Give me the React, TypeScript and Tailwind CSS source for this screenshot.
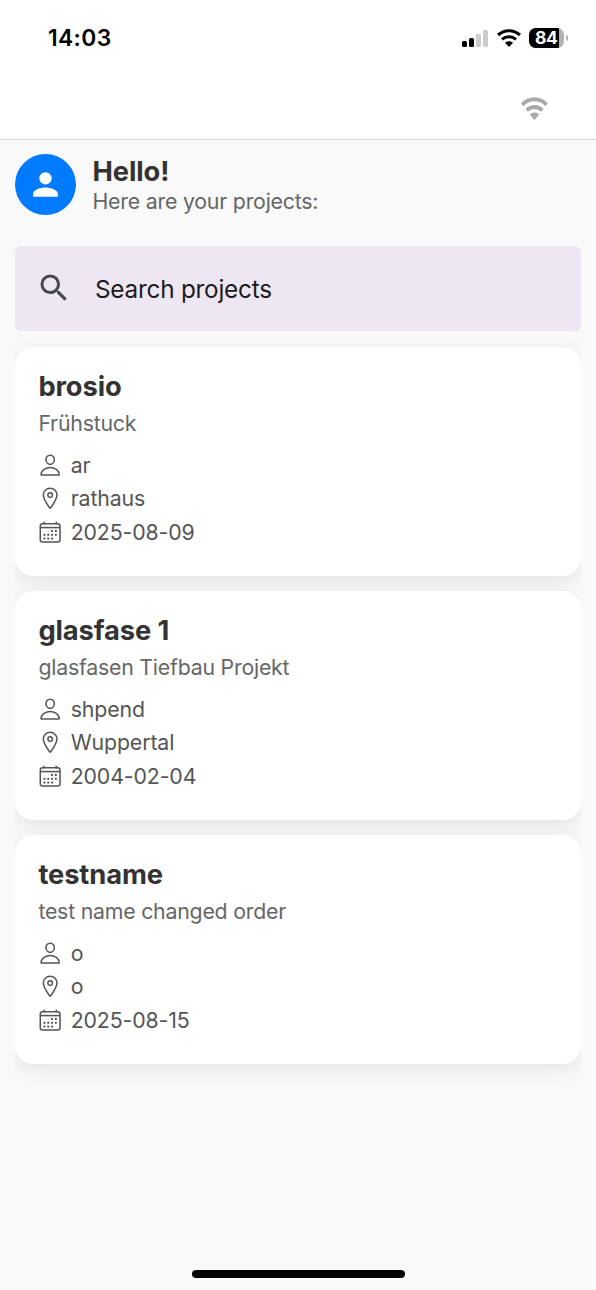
import {
  IoCalendarOutline,
  IoLocationOutline,
  IoPersonOutline,
} from 'react-icons/io5';
import { MdPerson, MdSearch } from 'react-icons/md';
import type { IconType } from 'react-icons';

type Project = {
  name: string;
  description: string;
  client: string;
  location: string;
  date: string;
};

const projects: Project[] = [
  { name: 'brosio', description: 'Frühstuck', client: 'ar', location: 'rathaus', date: '2025-08-09' },
  { name: 'glasfase 1', description: 'glasfasen Tiefbau Projekt', client: 'shpend', location: 'Wuppertal', date: '2004-02-04' },
  { name: 'testname', description: 'test name changed order', client: 'o', location: 'o', date: '2025-08-15' },
];

function WifiIcon({ className }: { className: string }) {
  return (
    <svg viewBox="0 0 24 18" preserveAspectRatio="none" className={className} fill="none" stroke="currentColor">
      <path d="M1.1 6C7.2.3 16.8.3 22.9 6" strokeWidth="3.2" />
      <path d="M5 10.4c3.9-3.5 10.1-3.5 14 0" strokeWidth="3.1" />
      <path d="M8 13.7c2.3-2 5.7-2 8 0l-3.5 3.9q-.5.5-1 0z" fill="currentColor" stroke="none" />
    </svg>
  );
}

function StatusBar() {
  return (
    <div className="flex h-[76px] items-center justify-between pl-12 pr-[28px]">
      <span className="mt-px text-[22.8px] font-semibold tracking-[0.4px] text-black">14:03</span>
      <div className="flex items-center">
        <div className="flex h-[17px] items-end gap-[2px]">
          <span className="h-[6px] w-[5px] rounded-[1.5px] bg-black" />
          <span className="h-[9px] w-[5px] rounded-[1.5px] bg-black" />
          <span className="h-[13px] w-[5px] rounded-[1.5px] bg-[#cccccc]" />
          <span className="h-[17px] w-[5px] rounded-[1.5px] bg-[#cccccc]" />
        </div>
        <WifiIcon className="ml-[9px] h-[18px] w-[24px] text-black" />
        <div className="ml-2 flex h-[20px] w-[35px] items-center overflow-hidden rounded-[6.5px] bg-[linear-gradient(to_right,#000_30px,#b3b3b3_30px)] pl-[6px]">
          <span className="text-[17.5px] font-bold leading-none tracking-[-0.3px] text-white">84</span>
        </div>
        <span className="ml-[2px] h-[6px] w-[2px] rounded-r-full bg-[#b3b3b3]" />
      </div>
    </div>
  );
}

function Detail({ icon: Icon, text }: { icon: IconType; text: string }) {
  return (
    <div className="flex h-[33.6px] items-center gap-[8px]">
      <Icon className="size-[24.3px] text-[#555555]" />
      <span className="text-[21.3px] leading-[26px] tracking-[-0.12px] text-[#555555]">{text}</span>
    </div>
  );
}

function ProjectCard({ project }: { project: Project }) {
  return (
    <div className="h-[228.7px] rounded-[18px] bg-white px-[23.2px] pt-[23px] shadow-[0_5px_18px_rgba(0,0,0,0.09)]">
      <h2 className="text-[27.3px] font-bold leading-[34px] tracking-[-0.1px] text-[#333333]">{project.name}</h2>
      <p className="mt-[6px] text-[21.3px] leading-[26px] tracking-[-0.22px] text-[#666666]">{project.description}</p>
      <div className="mt-[12px]">
        <Detail icon={IoPersonOutline} text={project.client} />
        <Detail icon={IoLocationOutline} text={project.location} />
        <Detail icon={IoCalendarOutline} text={project.date} />
      </div>
    </div>
  );
}

export default function App() {
  return (
    <div className="flex h-[1290px] w-[596px] flex-col overflow-hidden bg-[#f9f9f9] font-['Inter',sans-serif]">
      <header className="h-[140px] border-b border-[#d8d8d8] bg-white">
        <StatusBar />
        <div className="flex h-[64px] items-center justify-end pr-[48px]">
          <WifiIcon className="h-[23px] w-[27px] text-[#a9a9ab]" />
        </div>
      </header>

      <main className="flex flex-1 flex-col px-[15.2px]">
        <div className="mt-[14.4px] flex h-[61px] items-center">
          <div className="flex size-[61px] items-center justify-center rounded-full bg-[#007bff]">
            <MdPerson className="size-[37px] text-white" />
          </div>
          <div className="-mt-px ml-[16.3px]">
            <h1 className="text-[27.3px] font-bold leading-[33px] tracking-[-0.1px] text-[#333333]">Hello!</h1>
            <p className="text-[21.3px] leading-[26px] tracking-[-0.21px] text-[#666666]">Here are your projects:</p>
          </div>
        </div>

        <div className="mt-[31px] flex h-[85px] shrink-0 items-center rounded-[6px] bg-[#ede7f3] pl-[21.3px]">
          <MdSearch className="mb-[2px] size-[36px] text-[#49454f]" />
          <span className="ml-[22.5px] text-[24.3px] tracking-[-0.22px] text-[#1d1b20]">Search projects</span>
        </div>

        <div className="flex flex-1 flex-col gap-[15.3px] overflow-hidden pt-[15.5px]">
          {projects.map((project) => (
            <ProjectCard key={project.name} project={project} />
          ))}
        </div>
      </main>

      <div className="flex h-[20px] shrink-0 justify-center">
        <div className="h-[7.5px] w-[213px] rounded-full bg-black" />
      </div>
    </div>
  );
}
